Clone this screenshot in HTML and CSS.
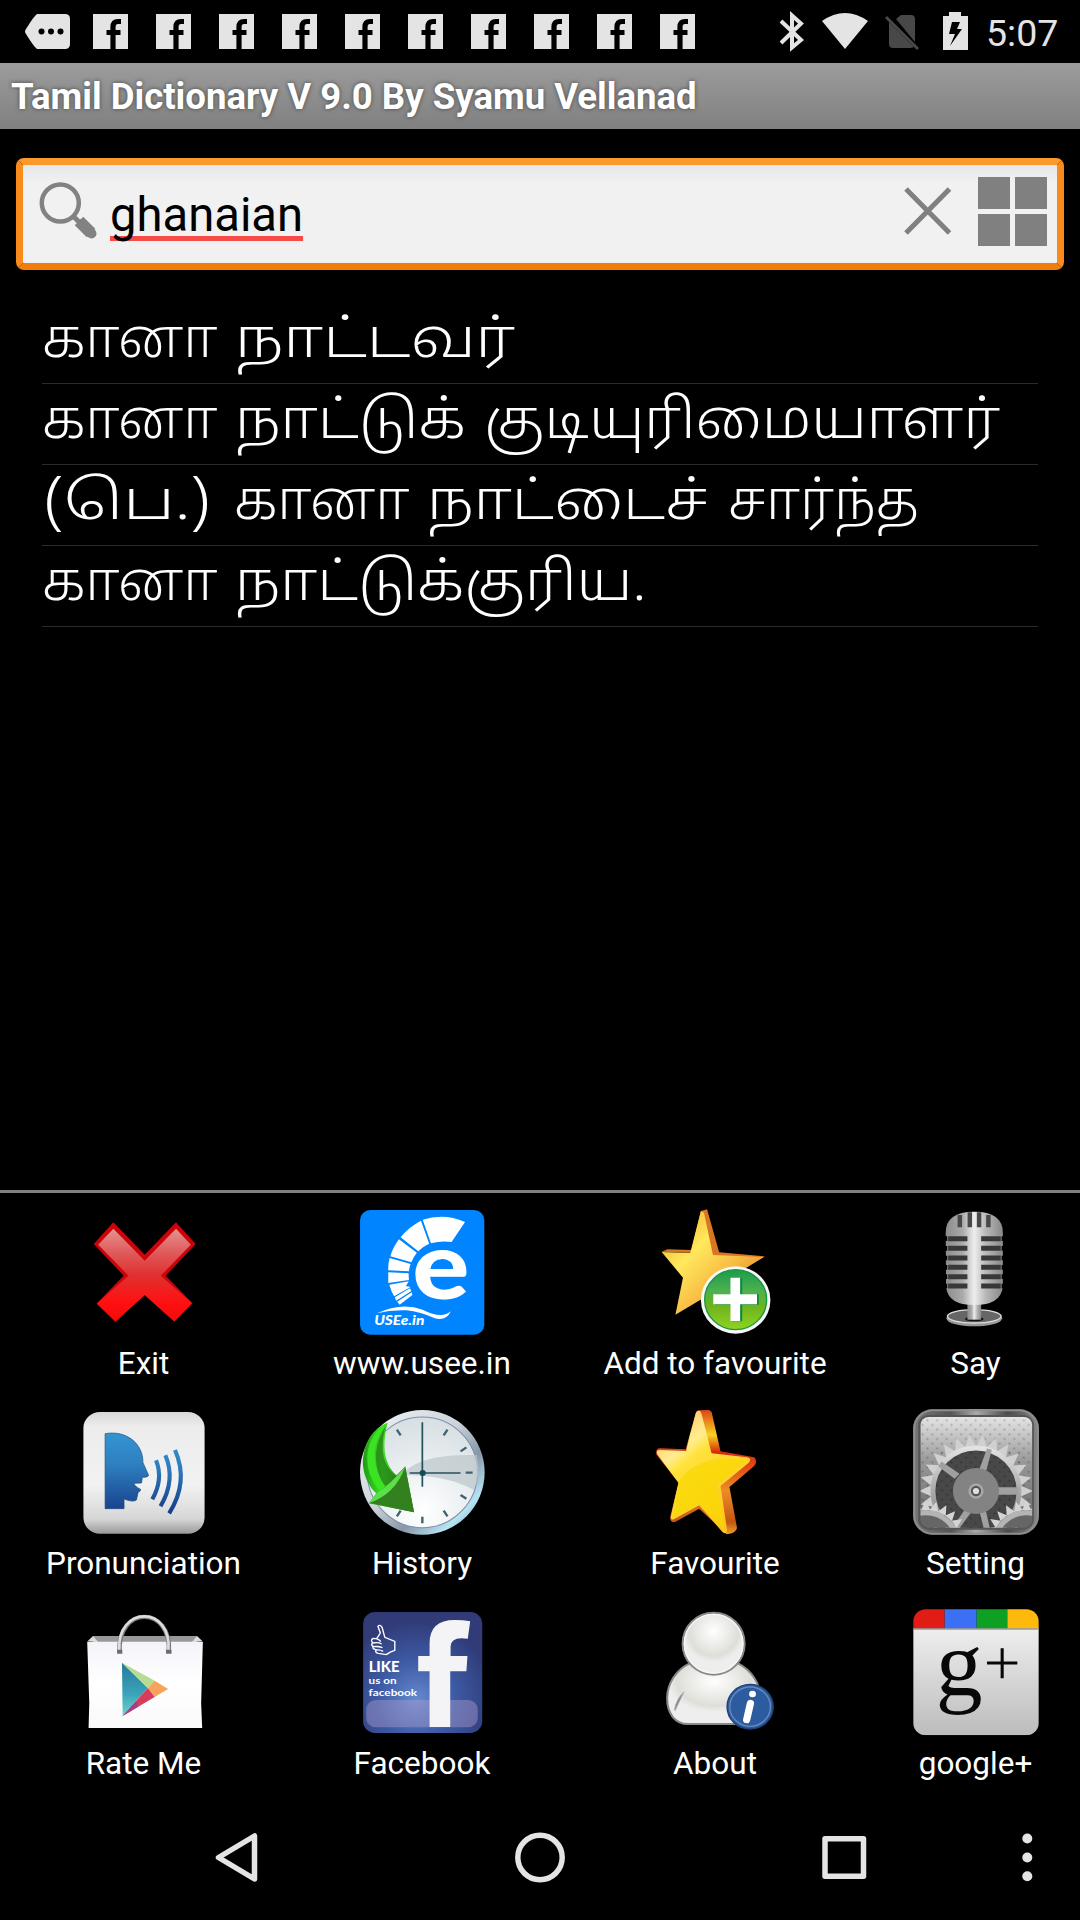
FILE: index.html
```html
<!DOCTYPE html>
<html lang="ta">
<head>
<meta charset="utf-8">
<title>Tamil Dictionary</title>
<link rel="stylesheet" href="styles.css">
</head>
<body>
<header class="status">
  <svg class="status-more" viewBox="0 0 45 35"><path d="M12 0H40Q45 0 45 5V30Q45 35 40 35H12Q9 33 1 20Q-1 17.500 1 15Q9 2 12 0Z" fill="#e4e4e4"/><g fill="#000"><circle cx="16.500" cy="17.500" r="3"/><circle cx="26" cy="17.500" r="3"/><circle cx="35.500" cy="17.500" r="3"/></g></svg>
  <div class="notices">
    <svg viewBox="0 0 35 35"><defs><g id="fb"><path d="M0 0H35V35H0Z" fill="#e4e4e4"/><path d="M28 7.500H25Q20 7.500 20 13V35M13.500 18.500H27.500" fill="none" stroke="#000" stroke-width="5.200"/></g></defs><use href="#fb"/></svg>
    <svg viewBox="0 0 35 35"><use href="#fb"/></svg>
    <svg viewBox="0 0 35 35"><use href="#fb"/></svg>
    <svg viewBox="0 0 35 35"><use href="#fb"/></svg>
    <svg viewBox="0 0 35 35"><use href="#fb"/></svg>
    <svg viewBox="0 0 35 35"><use href="#fb"/></svg>
    <svg viewBox="0 0 35 35"><use href="#fb"/></svg>
    <svg viewBox="0 0 35 35"><use href="#fb"/></svg>
    <svg viewBox="0 0 35 35"><use href="#fb"/></svg>
    <svg viewBox="0 0 35 35"><use href="#fb"/></svg>
  </div>
  <svg class="status-system" viewBox="780 0 190 63">
    <path d="M781 21L801 40L792 47.500V15.500L801 23.500L781 43" fill="none" stroke="#e4e4e4" stroke-width="4"/>
    <path d="M822 21Q845 5 868 21L845 49Z" fill="#e4e4e4"/>
    <path d="M896 19L901 15H911Q915 15 915 19V42ZM889 22L914 47Q912 48 910 48H893Q889 48 889 44Z" fill="#484848"/><path d="M886 17L918 49" stroke="#484848" stroke-width="3"/>
    <path d="M943 16H949V12H961V16H968V50H943Z" fill="#e4e4e4"/><path d="M952 22L949 34H955L950 46L962 29H957L960 22Z"/>
  </svg>
  <time class="clock">5:07</time>
</header>
<div class="title">Tamil Dictionary V 9.0 By Syamu Vellanad</div>
<div class="search">
  <svg class="search-glass" viewBox="38 180 60 62"><circle cx="60.300" cy="203" r="18.500" fill="none" stroke="#828282" stroke-width="4.500"/><path d="M73 216L81 224" stroke="#828282" stroke-width="5"/><path d="M82 224L91.500 233.500" stroke="#828282" stroke-width="10" stroke-linecap="round"/><path d="M79 221L91 233" stroke="#828282" stroke-width="12"/></svg>
  <span class="query">ghanaian</span>
  <svg class="search-clear" viewBox="904 187 48 48"><path d="M906 189L949.500 233M949.500 189L906 233" stroke="#808080" stroke-width="5"/></svg>
  <div class="search-grid"><i></i><i></i><i></i><i></i></div>
</div>
<main class="results">
  <p><span class="word w-ghana">கானா</span> <span class="word w-native">நாட்டவர்</span></p>
  <p><span class="word w-ghana">கானா</span> <span class="word w-country">நாட்டுக்</span> <span class="word w-citizen">குடியுரிமையாளர்</span></p>
  <p><span class="word w-abbr">(பெ.)</span> <span class="word w-ghana">கானா</span> <span class="word w-land">நாட்டைச்</span> <span class="word w-related">சார்ந்த</span></p>
  <p><span class="word w-ghana">கானா</span> <span class="word w-of">நாட்டுக்குரிய.</span></p>
</main>
<section class="menu">
  <div class="tile">
    <svg viewBox="234 87 366 378" preserveAspectRatio="none">
      <defs><linearGradient id="red" x1="0" y1="0" x2="0" y2="1"><stop offset="0" stop-color="#e69292"/><stop offset=".25" stop-color="#df5c5c"/><stop offset=".5" stop-color="#e03030"/><stop offset=".8" stop-color="#ff1010"/><stop offset="1" stop-color="#f00c0c"/></linearGradient></defs>
      <path d="M328 127L419 224L510 127L567 192L480 287L558 370L505 425L419 345L334 426L279 371L358 287L271 192Z" fill="#cc0409"/>
      <path d="M328 146L419 242L510 146L553 194L466 287L556 370L505 424L419 345L334 424L281 370L372 287L284 194Z" fill="url(#red)"/>
    </svg><span>Exit</span>
  </div>
  <div class="tile">
    <svg viewBox="1042 87 366 378" preserveAspectRatio="none">
      <rect x="1045" y="90" width="361" height="374" rx="30" fill="#0084ff"/>
      <path d="M1350 126Q1290 98 1227 119L1251 190Q1280 182 1311 186ZM1222 122Q1185 142 1163 172L1214 214Q1228 199 1246 191ZM1158 178Q1140 203 1133 229L1194 247Q1200 231 1210 218ZM1131 234Q1126 252 1127 271L1187 274Q1188 262 1192 252ZM1127 277V309L1187 300L1186 280ZM1130 314Q1135 333 1144 349L1192 321L1178 318L1187 304ZM1146 352L1190 325L1194 333L1150 362ZM1153 365L1195 337L1197 345L1160 374Z" fill="#fff"/>
      <text x="1197" y="358" class="usee-e" textLength="166" lengthAdjust="spacingAndGlyphs">e</text>
      <path d="M1094 400Q1165 365 1227 389Q1282 418 1309 394Q1295 424 1262 415Q1220 395 1180 391Q1135 389 1094 400Z" fill="#fff"/>
      <text x="1086" y="434" class="usee-label" textLength="146" lengthAdjust="spacingAndGlyphs">USEe.in</text>
    </svg><span>www.usee.in</span>
  </div>
  <div class="tile">
    <svg viewBox="325 87 366 378" preserveAspectRatio="none">
      <defs><linearGradient id="gold" x1="0" y1="0" x2="1" y2="1"><stop offset="0" stop-color="#f0a020"/><stop offset=".35" stop-color="#ffe95c"/><stop offset=".6" stop-color="#f8bd45"/><stop offset="1" stop-color="#d36b12"/></linearGradient>
      <linearGradient id="plus" x1="0" y1="0" x2="0" y2="1"><stop offset="0" stop-color="#1a9c4a"/><stop offset=".35" stop-color="#4eb050"/><stop offset=".6" stop-color="#6cb31c"/><stop offset="1" stop-color="#90d323"/></linearGradient></defs>
      <path d="M467 93L485 88L520 217L652 229L600 262L500 240L436 218L352 215L370 208L440 210Z" fill="#d87622"/>
      <path d="M467 93L476 98L502 225L650 231L552 293L541 360L466 359L393 404L415 293L353 216L436 219Z" fill="url(#gold)"/>
      <circle cx="568" cy="360" r="101" fill="#f8f8f8"/><circle cx="568" cy="359" r="90" fill="url(#plus)" stroke="#169644" stroke-width="4"/>
      <path d="M557 294H587V343H635V374H587V424H557V374H508V343H557Z" fill="#0c8a3c"/><path d="M553 293H581V343H630V373H581V423H553V373H503V343H553Z" fill="#fff"/>
    </svg><span>Add to favourite</span>
  </div>
  <div class="tile">
    <svg viewBox="1085 87 366 378" preserveAspectRatio="none">
      <defs><linearGradient id="mic"><stop offset="0" stop-color="#8c8c8c"/><stop offset=".3" stop-color="#ababab"/><stop offset=".5" stop-color="#eee"/><stop offset=".7" stop-color="#b8b8b8"/><stop offset="1" stop-color="#888"/></linearGradient></defs>
      <ellipse cx="1263" cy="415" rx="81" ry="24" fill="#999"/><ellipse cx="1263" cy="409" rx="78" ry="20" fill="#666" stroke="#ddd" stroke-width="4"/><ellipse cx="1263" cy="417" rx="27" ry="7" fill="#111"/>
      <rect x="1243" y="365" width="40" height="54" fill="url(#mic)"/>
      <path d="M1180 158Q1180 95 1263 95Q1346 95 1346 158V320Q1340 375 1263 375Q1186 375 1181 320Z" fill="url(#mic)"/>
      <path d="M1221 105V142M1250 97V142M1277 97V142M1304 105V142" stroke="#484848" stroke-width="13"/>
      <path d="M1187 176H1243M1187 205H1243M1187 234H1243M1187 262H1243M1187 290H1243M1187 318H1243M1283 176H1340M1283 205H1340M1283 234H1340M1283 262H1340M1283 290H1340M1283 318H1340" stroke="#383838" stroke-width="15"/>
      <path d="M1181 169V183M1181 198V212M1181 227V241M1181 255V269M1181 283V297M1181 311V325M1346 169V183M1346 198V212M1346 227V241M1346 255V269M1346 283V297M1346 311V325" stroke="#000" stroke-width="7"/>
    </svg><span>Say</span>
  </div>
  <div class="tile">
    <svg viewBox="234 57 366 378" preserveAspectRatio="none">
      <defs><linearGradient id="key" x1="0" y1="0" x2="0" y2="1"><stop offset="0" stop-color="#d8d8d8"/><stop offset=".12" stop-color="#ececec"/><stop offset=".6" stop-color="#f2f2f2"/><stop offset=".88" stop-color="#d6d6d6"/><stop offset="1" stop-color="#999"/></linearGradient>
      <linearGradient id="blue" gradientUnits="userSpaceOnUse" x1="0" y1="130" x2="0" y2="365"><stop offset="0" stop-color="#3494d2"/><stop offset=".4" stop-color="#2e7fc0"/><stop offset="1" stop-color="#173f8a"/></linearGradient></defs>
      <rect x="241" y="66" width="352" height="365" rx="48" fill="url(#key)"/>
      <path d="M304 131C365 120 415 160 414 218L430 255Q431 262 412 262L410 279L388 280Q388 288 407 298Q408 304 400 307L395 330Q385 338 359 327V356H304Z" fill="url(#blue)" stroke="#1c4a80" stroke-width="2"/>
      <path d="M452 211Q474 268 441 328M479 196Q510 270 465 349M507 180Q548 275 490 370" fill="none" stroke="url(#blue)" stroke-width="12"/>
    </svg><span>Pronunciation</span>
  </div>
  <div class="tile">
    <svg viewBox="1042 57 366 378" preserveAspectRatio="none">
      <defs><linearGradient id="rim" x1="0" y1="0" x2="1" y2="1"><stop offset="0" stop-color="#f4f7f8"/><stop offset=".45" stop-color="#ccd3da"/><stop offset=".65" stop-color="#8797a8"/><stop offset=".82" stop-color="#b6e4f3"/><stop offset="1" stop-color="#758494"/></linearGradient>
      <radialGradient id="dial" cx=".5" cy=".85" r=".9"><stop offset="0" stop-color="#fff"/><stop offset="1" stop-color="#d4dde1"/></radialGradient>
      <linearGradient id="green"><stop offset="0" stop-color="#1f9b14"/><stop offset=".4" stop-color="#3fe426"/><stop offset=".7" stop-color="#2f8a1b"/><stop offset="1" stop-color="#2d861b"/></linearGradient></defs>
      <ellipse cx="1226" cy="247" rx="181" ry="187" fill="url(#rim)"/><ellipse cx="1226" cy="247" rx="160" ry="166" fill="url(#dial)" stroke="#7e91ac" stroke-width="3"/>
      <path d="M1165 255Q1215 190 1384 195Q1396 260 1376 300Q1300 255 1165 255Z" fill="#bdc8cc" opacity=".75"/>
      <path d="M1152 119L1163 136M1299 119L1288 136M1354 172L1337 184M1372 248H1352M1354 326L1337 315M1299 379L1288 362M1226 380V400M1152 379L1163 362" stroke="#406373" stroke-width="7"/>
      <path d="M1226 97V290M1189 249H1337" stroke="#28525f" stroke-width="5"/><circle cx="1227" cy="249" r="9" fill="#164b5a"/>
      <path d="M1125 98C1070 120 1050 180 1054 230C1058 265 1075 295 1092 310L1071 340L1202 367L1176 229L1154 258C1120 230 1105 180 1125 98Z" fill="url(#green)"/>
      <path d="M1122 100C1060 140 1045 230 1100 300Q1112 296 1118 286C1080 235 1075 160 1122 100Z" fill="#3be322"/><path d="M1120 107C1083 160 1082 240 1118 288Q1136 276 1150 258C1105 225 1105 160 1120 107Z" fill="#267d18" opacity=".75"/><path d="M1071 339L1176 230L1202 367Z" fill="#33801f"/><path d="M1071 339Q1148 312 1176 230Q1130 286 1094 309Z" fill="#5ce04a"/>
    </svg><span>History</span>
  </div>
  <div class="tile">
    <svg viewBox="325 57 366 378" preserveAspectRatio="none">
      <defs><linearGradient id="side" x1="0" y1="0" x2="0" y2="1"><stop offset="0" stop-color="#dd4316"/><stop offset=".2" stop-color="#f5d520"/><stop offset=".34" stop-color="#d9280b"/><stop offset=".65" stop-color="#ed8d26"/><stop offset=".9" stop-color="#c45610"/><stop offset="1" stop-color="#f0a030"/></linearGradient>
      <linearGradient id="face" x1="0" y1="0" x2=".6" y2="1"><stop offset="0" stop-color="#ffb04c"/><stop offset=".35" stop-color="#ffee91"/><stop offset=".45" stop-color="#ffe23b"/><stop offset="1" stop-color="#ffc51c"/></linearGradient></defs>
      <path d="M459 61L489 60Q498 62 499 70L524 184L622 202Q633 214 621 229L550 291L572 414Q569 430 542 433L462 356L392 396Q376 398 378 380L402 278L338 194Q334 176 348 175L423 178L452 70Z" fill="url(#side)"/>
      <path d="M459 62Q467 62 469 72L498 190L600 202Q617 205 606 218L524 288L543 420Q541 437 529 425L462 346L391 386Q378 394 380 379L402 278L340 193Q335 180 349 180L424 183L452 70Q454 62 459 62Z" fill="url(#face)"/>
      <path d="M402 278Q430 222 524 205L600 210L514 285L534 415L462 341L388 382Z" fill="#f8d800" opacity=".7"/>
    </svg><span>Favourite</span>
  </div>
  <div class="tile">
    <svg viewBox="1085 57 366 378" preserveAspectRatio="none">
      <defs><linearGradient id="frame" x1="0" y1="0" x2="1" y2="0"><stop offset="0" stop-color="#777"/><stop offset=".3" stop-color="#555"/><stop offset=".5" stop-color="#aaa"/><stop offset=".75" stop-color="#4b4b4b"/><stop offset="1" stop-color="#888"/></linearGradient>
      <linearGradient id="mesh" x1="0" y1="0" x2="0" y2="1"><stop offset="0" stop-color="#e8e8e8"/><stop offset=".4" stop-color="#999"/><stop offset="1" stop-color="#606060"/></linearGradient>
      <linearGradient id="rotor" gradientUnits="userSpaceOnUse" x1="0" y1="-130" x2="0" y2="130"><stop offset="0" stop-color="#e4e4e4"/><stop offset=".5" stop-color="#aaa"/><stop offset="1" stop-color="#777"/></linearGradient>
      <pattern id="holes" width="28" height="28" patternUnits="userSpaceOnUse"><circle cx="7" cy="7" r="3"/><circle cx="21" cy="21" r="3"/></pattern>
      <clipPath id="plate"><rect x="1107" y="81" width="324" height="332" rx="24"/></clipPath>
      <path id="t" d="M-17 -128L0 -165L17 -128Z"/>
      <g id="t4"><use href="#t"/><use href="#t" transform="rotate(13.850)"/><use href="#t" transform="rotate(27.700)"/><use href="#t" transform="rotate(41.550)"/></g>
      <g id="teeth"><use href="#t4"/><use href="#t4" transform="rotate(55.400)"/><use href="#t4" transform="rotate(110.800)"/><use href="#t4" transform="rotate(166.200)"/><use href="#t4" transform="rotate(221.600)"/><use href="#t4" transform="rotate(277)"/><use href="#t" transform="rotate(332.400)"/><use href="#t" transform="rotate(346.200)"/></g></defs>
      <rect x="1085" y="57" width="366" height="378" rx="58" fill="url(#frame)"/><rect x="1089" y="61" width="358" height="370" rx="54" fill="none" stroke="#8e8e8e" stroke-width="5"/><rect x="1100" y="75" width="336" height="344" rx="32" fill="#555"/>
      <g clip-path="url(#plate)"><path d="M1100 75H1440V420H1100Z" fill="url(#mesh)"/><path d="M1100 75H1440V420H1100Z" fill="url(#holes)" opacity=".25"/>
        <ellipse cx="1268" cy="303" rx="125" ry="129" fill="#484848"/><path d="M1145 180H1395V420H1145Z" fill="url(#holes)" opacity=".3"/>
        <g transform="translate(1268 303) scale(1 1.030)"><use href="#teeth" transform="rotate(7)" fill="#d0d0d0"/><circle r="125" fill="none" stroke="url(#rotor)" stroke-width="14"/><path d="M10 -64L32 -124L46 -120L30 -60ZM-62 -36L-110 -72L-100 -86L-48 -50ZM60 -11H124V11H60ZM-30 50L-70 110L-55 118L-14 62ZM10 60L26 122L42 118L28 54Z" fill="#a0a0a0"/><circle r="67" fill="#838383"/><circle r="22" fill="#aaa"/><circle r="15" fill="#555"/><circle r="9" fill="#ddd"/></g>
        <g fill="#d4d4d4"><g transform="translate(1122 460) scale(.78)"><use href="#teeth"/><circle r="118" fill="#666" stroke="#b4b4b4" stroke-width="20"/></g><g transform="translate(1415 460) scale(.78)"><use href="#teeth"/><circle r="118" fill="#666" stroke="#b4b4b4" stroke-width="20"/></g></g>
      </g>
    </svg><span>Setting</span>
  </div>
  <div class="tile">
    <svg viewBox="234 57 366 378" preserveAspectRatio="none">
      <defs><linearGradient id="bag" x1="0" y1="0" x2="0" y2="1"><stop offset="0" stop-color="#f5f3f9"/><stop offset=".5" stop-color="#fff"/><stop offset="1" stop-color="#f9f9f9"/></linearGradient><linearGradient id="teal" x1="0" y1="0" x2="0" y2="1"><stop offset="0" stop-color="#25799e"/><stop offset=".6" stop-color="#3ba5b9"/><stop offset="1" stop-color="#72d6c5"/></linearGradient></defs>
      <path d="M269 138H571V156H269Z" fill="#98989b"/><path d="M253 154L269 138L284 156ZM587 154L571 138L556 156Z" fill="#ddd"/>
      <path d="M252 155H588L583 340L586 414H256L258 340Z" fill="url(#bag)"/>
      <path d="M346 188C337 45 500 45 489 188" fill="none" stroke="#777" stroke-width="13"/><path d="M345 182C338 45 498 45 488 182" fill="none" stroke="#dcdce1" stroke-width="8"/><path d="M339 179H354V191H339ZM481 179H497V191H481Z" fill="#6c6c72"/>
      <path d="M353 218L428 294L355 378Z" fill="url(#teal)"/><path d="M353 218L448 272L428 294Z" fill="#b5dc92"/><path d="M428 294L448 272L487 297L448 321Z" fill="#f8a35c"/><path d="M428 294L448 321L355 378Z" fill="#d93b5b"/><path d="M355 378L395 332L400 350Z" fill="#a63d88"/>
    </svg><span>Rate Me</span>
  </div>
  <div class="tile">
    <svg viewBox="1042 57 366 378" preserveAspectRatio="none">
      <defs><radialGradient id="navy" cx=".45" cy=".72" r=".65"><stop offset="0" stop-color="#6489ce"/><stop offset=".5" stop-color="#3d5aa4"/><stop offset="1" stop-color="#303b78"/></radialGradient></defs>
      <rect x="1054" y="66" width="346" height="363" rx="35" fill="url(#navy)"/><rect x="1063" y="330" width="324" height="82" rx="28" fill="#b0a0cf" opacity=".42"/>
      <path d="M1247 411V244H1214V198H1247V160Q1247 90 1320 90Q1345 90 1365 94L1358 146Q1308 138 1308 170V198H1357L1354 244H1307V411Z" fill="#f4f4f6"/>
      <path d="M1094 145L1104 129L1097 109Q1103 102 1109 112L1117 142L1146 154V181Q1135 184 1121 194L1098 190Q1088 188 1091 179Q1080 177 1083 169Q1075 164 1082 158Q1074 151 1083 145Q1100 145 1105 155M1083 159Q1098 156 1108 162M1084 170Q1098 168 1110 173M1091 180Q1103 178 1112 184" fill="none" stroke="#fff" stroke-width="4"/>
      <g class="fb-copy"><text x="1070" y="247" class="fb-like" textLength="90" lengthAdjust="spacingAndGlyphs">LIKE</text><text x="1070" y="282" textLength="81" lengthAdjust="spacingAndGlyphs">us on</text><text x="1070" y="318" textLength="141" lengthAdjust="spacingAndGlyphs">facebook</text></g>
    </svg><span>Facebook</span>
  </div>
  <div class="tile">
    <svg viewBox="325 57 366 378" preserveAspectRatio="none">
      <defs><radialGradient id="head" cx=".5" cy=".3"><stop offset="0" stop-color="#fff"/><stop offset=".8" stop-color="#deded9"/><stop offset="1" stop-color="#eee"/></radialGradient></defs>
      <path d="M435 220H575C613 240 640 280 640 325C640 380 612 402 580 402H430C391 402 369 370 369 325C369 280 397 237 435 220Z" fill="url(#head)" stroke="#888a85" stroke-width="6"/><path d="M390 360Q395 327 418 305L392 362" fill="#888" stroke="#aaa" stroke-width="2"/>
      <ellipse cx="504" cy="161" rx="90" ry="93" fill="url(#head)" stroke="#888a85" stroke-width="6"/><ellipse cx="504" cy="161" rx="85" ry="88" fill="none" stroke="#f6f6f4" stroke-width="4"/>
      <circle cx="610" cy="350" r="67" fill="#2c5c9f" stroke="#1d4278" stroke-width="4"/><circle cx="610" cy="350" r="59" fill="none" stroke="#6588bd" stroke-width="4"/><circle cx="617" cy="312" r="10" fill="#fff"/><path d="M611 340L600 389" stroke="#fff" stroke-width="21" stroke-linecap="round"/>
    </svg><span>About</span>
  </div>
  <div class="tile">
    <svg viewBox="1085 57 366 378" preserveAspectRatio="none">
      <defs><linearGradient id="paper" x1="0" y1="0" x2="0" y2="1"><stop offset="0" stop-color="#eee"/><stop offset="1" stop-color="#bcbcbc"/></linearGradient><clipPath id="gcard"><rect x="1086" y="58" width="364" height="378" rx="36"/></clipPath></defs>
      <g clip-path="url(#gcard)"><path d="M1085 115H1451V436H1085Z" fill="url(#paper)"/><path d="M1085 57H1177V116H1085Z" fill="#e01c14"/><path d="M1177 57H1270V116H1177Z" fill="#3c70f4"/><path d="M1270 57H1359V116H1270Z" fill="#0da022"/><path d="M1359 57H1451V116H1359Z" fill="#fdba0c"/><path d="M1085 117H1451" stroke="#999" stroke-width="4"/></g>
      <text x="1151" y="314" class="g-mark" textLength="136" lengthAdjust="spacingAndGlyphs">g</text><path d="M1344 175V265M1300 219H1388" stroke="#080808" stroke-width="9"/>
    </svg><span>google+</span>
  </div>
</section>
<nav class="nav">
  <svg viewBox="0 1793 1080 127"><g fill="none" stroke="#e4e4e4" stroke-width="5.500" stroke-linejoin="round"><path d="M254.500 1836V1879L218.500 1857.500Z"/><circle cx="540" cy="1857.500" r="22.200"/><rect x="825" y="1838.800" width="38.500" height="37.500"/></g><g fill="#e4e4e4"><circle cx="1027.300" cy="1838.500" r="5"/><circle cx="1027.300" cy="1857.500" r="5"/><circle cx="1027.300" cy="1876.300" r="5"/></g></svg>
</nav>
</body>
</html>
```
FILE: styles.css
```css
* { box-sizing: border-box; }
body {
  margin: 0;
  width: 1080px;
  height: 1920px;
  display: flex;
  flex-direction: column;
  background: #000;
  color: #fff;
  font-family: Roboto, "Noto Sans", sans-serif;
  overflow: hidden;
}
svg { display: block; flex: none; overflow: visible; }

.status { height: 63px; flex: none; display: flex; align-items: center; padding-left: 25px; color: #e4e4e4; }
.status-more { width: 45px; height: 35px; }
.notices { display: flex; gap: 28px; margin-left: 23px; }
.notices svg { width: 35px; height: 35px; }
.status-system { width: 190px; height: 63px; margin-left: 85px; }
.clock { font-size: 37.500px; line-height: 63px; margin: 3px 0 0 16px; }

.title {
  height: 66px;
  flex: none;
  padding: 1px 0 0 11px;
  background: linear-gradient(#9c9c9c, #808080);
  font-size: 36.600px;
  font-weight: 700;
  line-height: 66px;
  white-space: nowrap;
  text-shadow: 0 0 4px #444;
}

.search {
  height: 112px;
  flex: none;
  margin: 29px 16px 0;
  padding: 0 10px 0 15px;
  display: flex;
  align-items: center;
  border: 7px solid;
  border-color: #fb9a2b #f98b1c #f27c0c;
  border-radius: 8px;
  background: linear-gradient(#e4e7ea, #f1f1f1 18px);
}
.search-glass { width: 60px; height: 62px; margin-top: -6px; }
.query {
  margin: 2px 0 0 11px;
  padding: 0 1px;
  color: #000;
  font-size: 47.200px;
  line-height: 50px;
  text-decoration: underline #f74b48 5px;
  text-underline-offset: 5px;
  text-decoration-skip-ink: none;
}
.search-clear { width: 48px; height: 48px; margin: -6px 26px 0 auto; }
.search-grid { display: grid; grid-template-columns: 32px 32px; grid-auto-rows: 32px; gap: 5px; margin-top: -6px; }
.search-grid i { background: #808080; }

.results { flex: 1; padding: 33px 42px 0; font-family: "Noto Sans Tamil", "Noto Sans", sans-serif; font-weight: 300; }
.results p { display: flex; margin: 0; height: 81px; padding-top: 1px; border-bottom: 1px solid #2b2b2b; font-size: 54px; line-height: 80px; white-space: nowrap; }

/* Each word keeps its own advance and horizontal stretch. */
.word { flex: none; transform-origin: 0 50%; }
.w-ghana { width: 193px; transform: scaleX(1.02); }
.w-native { transform: scaleX(1.187); }
.w-country { width: 249px; transform: scaleX(1.115); }
.w-citizen { transform: scaleX(1.1); }
.w-abbr { width: 191px; margin-left: 1px; transform: scaleX(1.265); }
.w-land { width: 301px; transform: scaleX(1.143); }
.w-related { transform: scaleX(1.013); }
.w-of { transform: scaleX(1.107); }

.menu {
  height: 603px;
  flex: none;
  border-top: 3px solid #808080;
  display: grid;
  grid-template: repeat(3, 200px) / 287px 270px 316px 205px;
}
.tile { display: flex; flex-direction: column; align-items: center; padding-top: 16px; }
.tile svg { width: 126px; height: 126px; }
.tile span { margin-top: 11px; font-size: 31.500px; line-height: 36px; white-space: nowrap; }

.usee-e { font: 900 280px Lato, sans-serif; fill: #fff; }
.usee-label { font: italic 900 39px Lato, sans-serif; fill: #fff; }
.fb-copy { font: 700 30px Lato, sans-serif; fill: #fff; }
.fb-like { font-weight: 900; font-size: 44px; }
.g-mark { font: 280px "Liberation Serif", serif; fill: #080808; }

.nav { height: 127px; flex: none; }
.nav svg { width: 1080px; height: 127px; }
```
